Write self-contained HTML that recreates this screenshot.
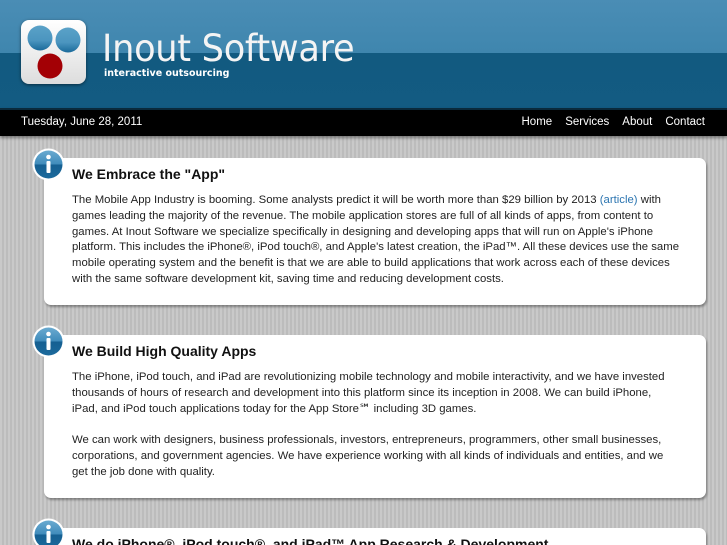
<!DOCTYPE html>
<html><head><meta charset="utf-8"><style>
*{margin:0;padding:0;box-sizing:border-box}
html,body{width:727px;height:545px;overflow:hidden}
body{font-family:"Liberation Sans",Arial,sans-serif;position:relative;
background:repeating-linear-gradient(90deg,#c9c9c9 0 2px,#bcbcbc 2px 4px);}
.hdr{position:absolute;left:0;top:0;width:727px;height:108px;background:linear-gradient(#4a8db5 0,#3f86ae 53px,#125a80 53px,#135b82 108px)}
.logo{position:absolute;left:21px;top:20px;width:65px;height:64px;border-radius:8px;background:linear-gradient(#fff,#ddd);box-shadow:0 1px 3px rgba(0,0,0,.5)}
.title{position:absolute;left:102px;top:27px;font-family:"DejaVu Sans",sans-serif;font-size:37px;color:#f4f4f4;letter-spacing:-0.3px;font-weight:normal;transform:scaleX(0.95);transform-origin:left}
.sub{position:absolute;left:104px;top:68px;font-family:"DejaVu Sans",sans-serif;font-size:9.5px;color:#fff;font-weight:bold}
.bar{position:absolute;left:0;top:108px;width:727px;height:28px;background:#000;border-top:2px solid #0a2a3c;box-shadow:0 2px 3px rgba(0,0,0,.4);color:#fff;font-size:11.5px}
.bar .d{position:absolute;left:21px;top:6px}
.bar .n{position:absolute;right:22px;top:6px;word-spacing:0}
.bar .n span{margin-left:13px}
.box{position:absolute;left:44px;width:662px;background:#fff;border-radius:7px;box-shadow:1px 2px 2px rgba(0,0,0,.35)}
.box h2{position:absolute;left:28px;top:8px;font-size:14px;font-weight:bold;color:#111;white-space:nowrap}
.box p{position:absolute;left:28px;font-size:11.35px;line-height:15.8px;color:#222;white-space:nowrap}
.ic{position:absolute;left:32px;width:33px;height:33px}
a{color:#2a74b0;text-decoration:none}
</style></head><body>
<div class="hdr">
<div class="logo">
<svg width="65" height="64" viewBox="0 0 65 64">
<defs><linearGradient id="b" x1="0" y1="0" x2="0" y2="1"><stop offset="0" stop-color="#5aa2c8"/><stop offset="0.6" stop-color="#4b95bf"/><stop offset="1" stop-color="#1a6a9a"/></linearGradient></defs>
<circle cx="19" cy="18" r="12.5" fill="url(#b)"/>
<circle cx="47" cy="20" r="12.5" fill="url(#b)"/>
<circle cx="29" cy="46" r="12.5" fill="#a30005"/>
</svg></div>
<div class="title">Inout Software</div>
<div class="sub">interactive outsourcing</div>
</div>
<div class="bar"><div class="d">Tuesday, June 28, 2011</div><div class="n"><span>Home</span><span>Services</span><span>About</span><span>Contact</span></div></div>

<div class="box" style="top:158px;height:147px">
<h2>We Embrace the "App"</h2>
<p style="top:35px">The Mobile App Industry is booming. Some analysts predict it will be worth more than $29 billion by 2013 <a>(article)</a> with<br>games leading the majority of the revenue. The mobile application stores are full of all kinds of apps, from content to<br>games. At Inout Software we specialize specifically in designing and developing apps that will run on Apple's iPhone<br>platform. This includes the iPhone®, iPod touch®, and Apple's latest creation, the iPad™. All these devices use the same<br>mobile operating system and the benefit is that we are able to build applications that work across each of these devices<br>with the same software development kit, saving time and reducing development costs.</p>
</div>
<div class="box" style="top:335px;height:163px">
<h2>We Build High Quality Apps</h2>
<p style="top:35px">The iPhone, iPod touch, and iPad are revolutionizing mobile technology and mobile interactivity, and we have invested<br>thousands of hours of research and development into this platform since its inception in 2008. We can build iPhone,<br>iPad, and iPod touch applications today for the App Store℠ including 3D games.<br><br>We can work with designers, business professionals, investors, entrepreneurs, programmers, other small businesses,<br>corporations, and government agencies. We have experience working with all kinds of individuals and entities, and we<br>get the job done with quality.</p>
</div>
<div class="box" style="top:528px;height:17px;border-radius:7px 7px 0 0;overflow:hidden">
<h2>We do iPhone®, iPod touch®, and iPad™ App Research &amp; Development</h2>
</div>

<svg class="ic" style="top:148px" viewBox="0 0 33 33"><defs><linearGradient id="g" x1="0" y1="0" x2="0" y2="1"><stop offset="0" stop-color="#6aaad0"/><stop offset="0.5" stop-color="#3f8bbb"/><stop offset="0.5" stop-color="#155f91"/><stop offset="1" stop-color="#1c6a9c"/></linearGradient></defs><circle cx="16.5" cy="16.5" r="16" fill="#fff"/><circle cx="16.5" cy="16.5" r="14" fill="url(#g)"/><circle cx="16.5" cy="9" r="2.3" fill="#fff"/><rect x="14.5" y="13" width="4" height="12" rx="1" fill="#fff"/></svg>
<svg class="ic" style="top:325px" viewBox="0 0 33 33"><circle cx="16.5" cy="16.5" r="16" fill="#fff"/><circle cx="16.5" cy="16.5" r="14" fill="url(#g)"/><circle cx="16.5" cy="9" r="2.3" fill="#fff"/><rect x="14.5" y="13" width="4" height="12" rx="1" fill="#fff"/></svg>
<div style="position:absolute;left:32px;top:518px;width:33px;height:27px;overflow:hidden"><svg width="33" height="33" viewBox="0 0 33 33" style="display:block"><circle cx="16.5" cy="16.5" r="16" fill="#fff"/><circle cx="16.5" cy="16.5" r="14" fill="url(#g)"/><circle cx="16.5" cy="9" r="2.3" fill="#fff"/><rect x="14.5" y="13" width="4" height="12" rx="1" fill="#fff"/></svg></div>
</body></html>
